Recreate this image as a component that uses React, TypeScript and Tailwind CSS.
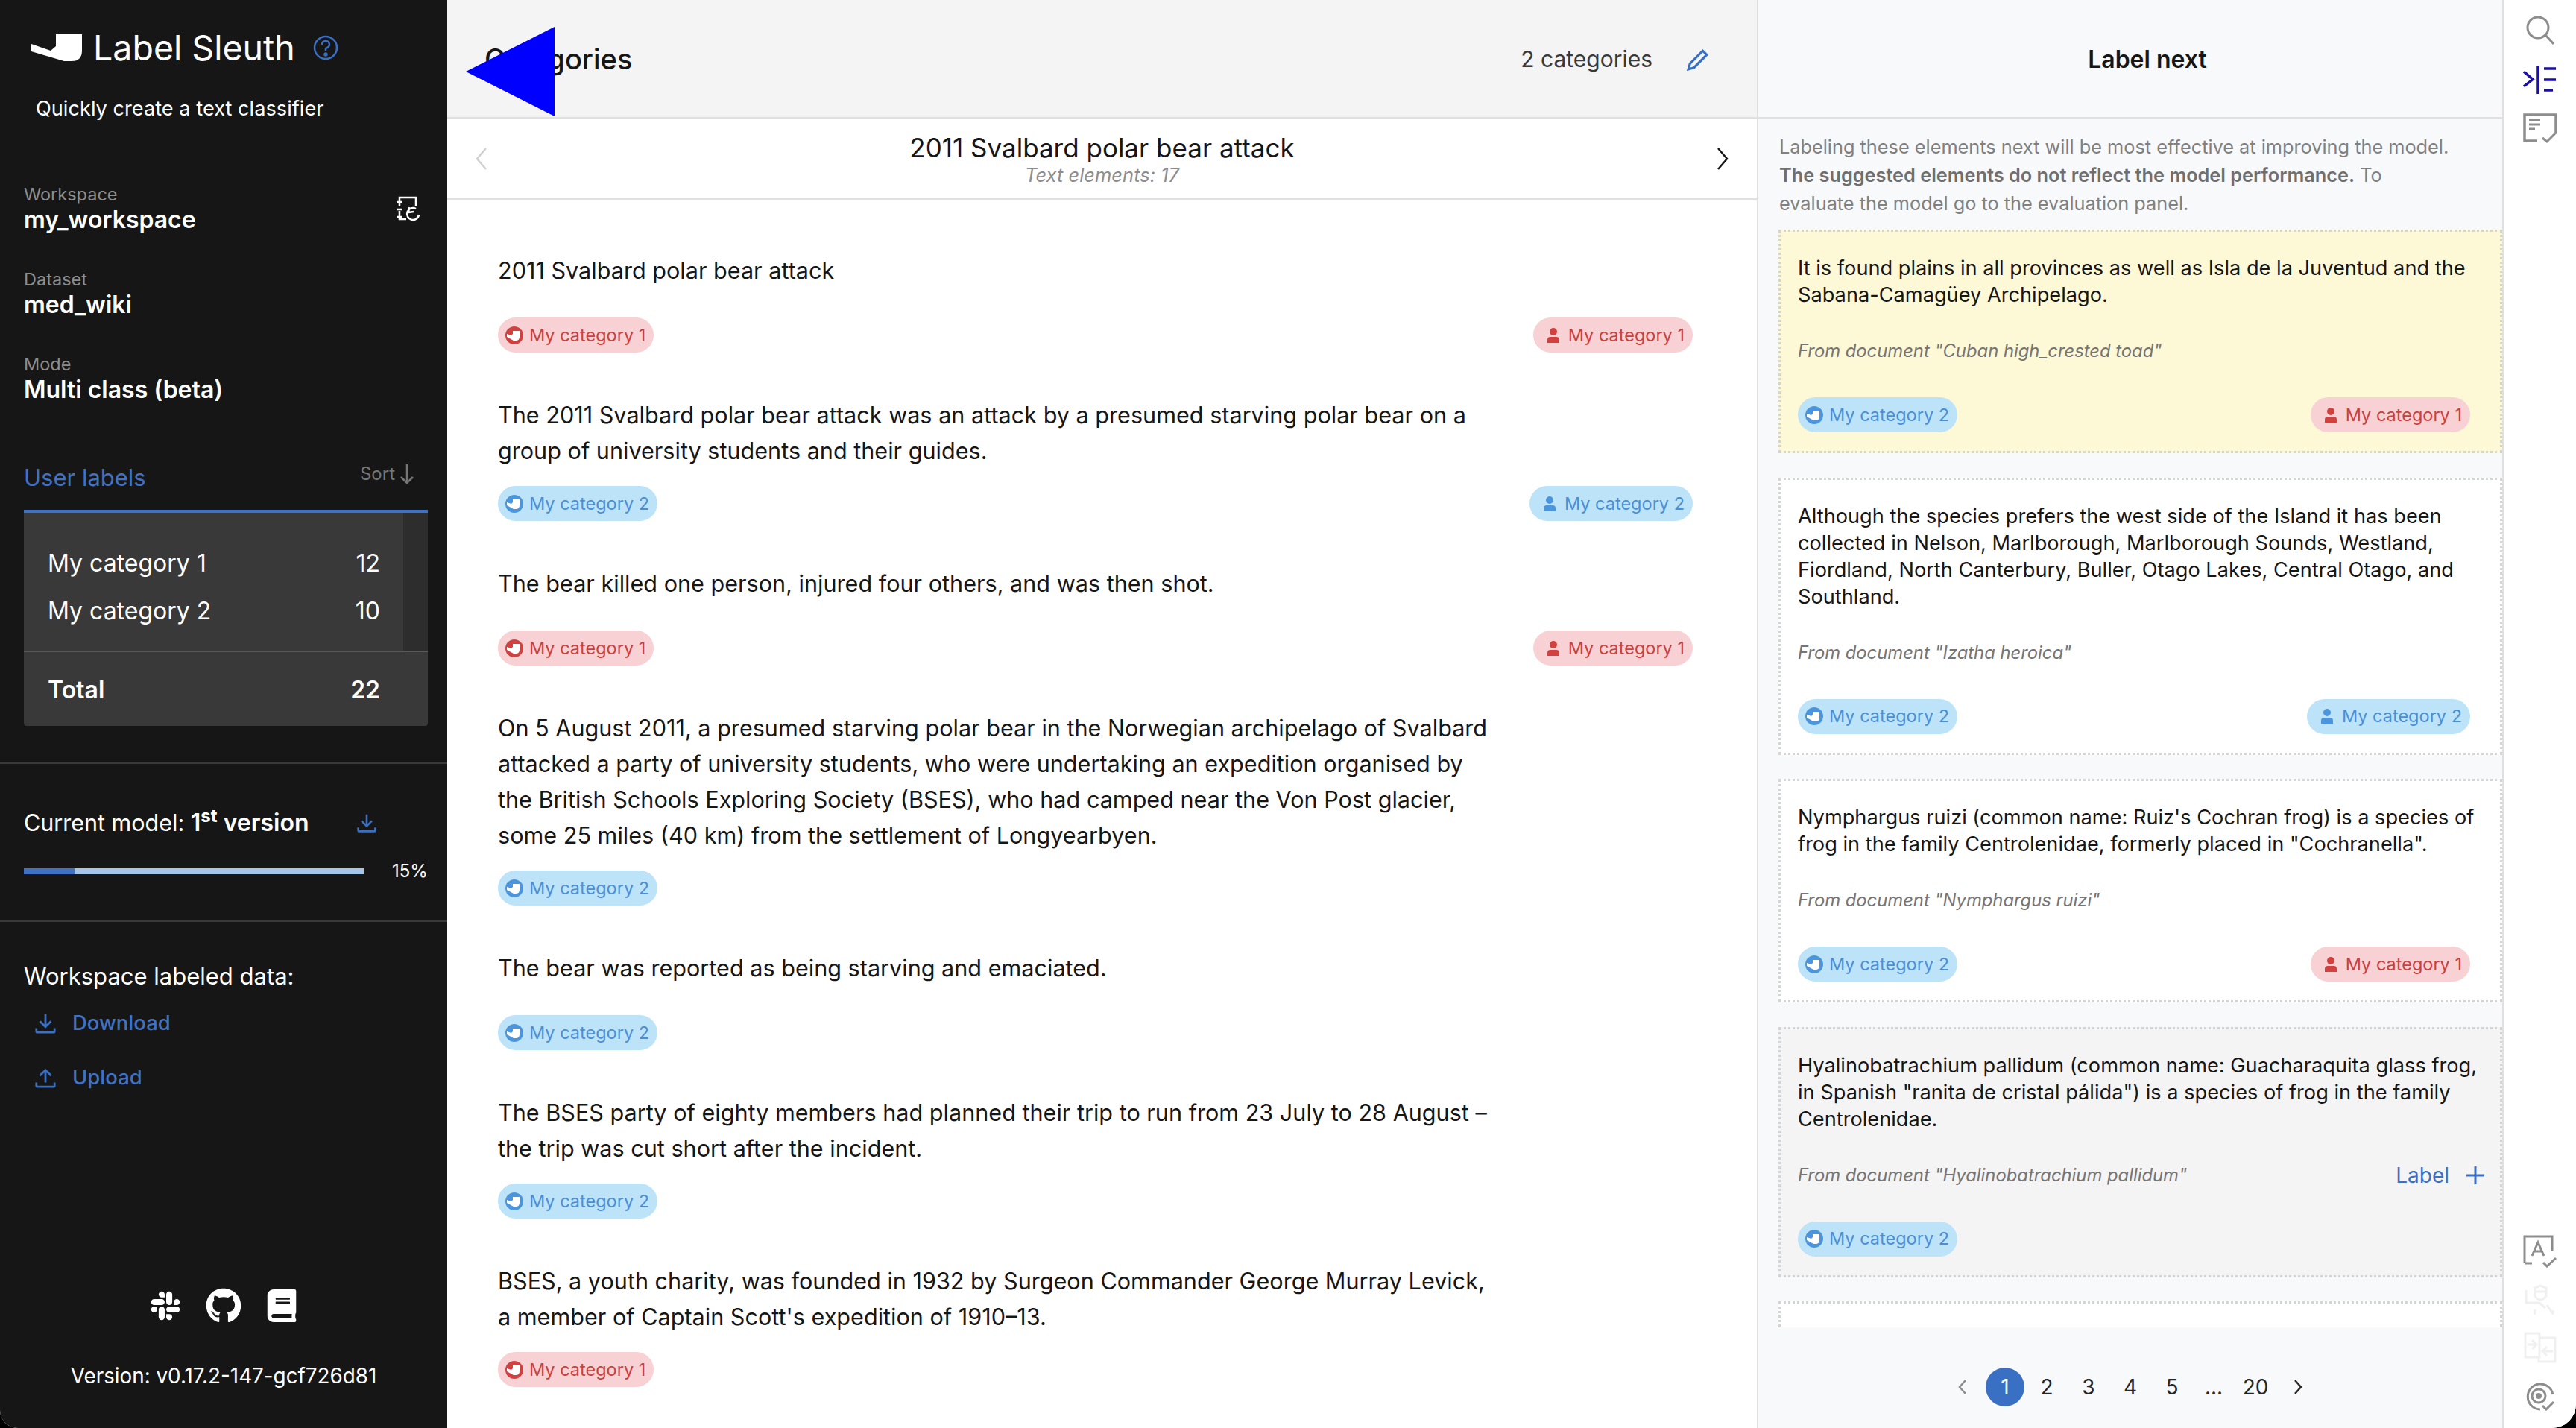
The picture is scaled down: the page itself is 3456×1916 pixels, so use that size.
import React from "react";
import { FaSlack, FaGithub, FaBook } from "react-icons/fa";

const logo = "M34 0H69V22Q69 36 55 36H45L1 23V13L27 22L34 16Z";

function Mini({ c }: { c: string }) {
  return (
    <svg width="26" height="26" viewBox="0 0 26 26" className="shrink-0">
      <circle cx="13" cy="13" r="12" fill={c} />
      <path d="M11 7H20V15Q20 20 15 20H12L3 15V11L9 13L11 11Z" fill="#fff" />
    </svg>
  );
}

function Person({ c }: { c: string }) {
  return (
    <svg width="26" height="26" viewBox="0 0 26 26" className="shrink-0">
      <circle cx="13" cy="8" r="5" fill={c} />
      <path d="M5 23V19Q5 15 9 15H17Q21 15 21 19V23Z" fill={c} />
    </svg>
  );
}

function Chip({ n, user = false }: { n: 1 | 2; user?: boolean }) {
  const red = n === 1;
  const c = red ? "#d0413f" : "#4a95dd";
  return (
    <span
      className={`inline-flex h-[47px] items-center gap-[7px] rounded-full pr-[11px] text-[23.5px] whitespace-nowrap ${
        user ? "pl-[14px]" : "pl-[9px]"
      } ${red ? "bg-[#f7d1d4] text-[#c9403f]" : "bg-[#bde3f9] text-[#4a8fd6]"}`}
    >
      {user ? <Person c={c} /> : <Mini c={c} />}
      My category {n}
    </span>
  );
}

function Para({ lines, left, right }: { lines: string[]; left?: 1 | 2; right?: 1 | 2 }) {
  return (
    <div className="mb-[60px]">
      <div className={`text-[30.6px] leading-[48px] text-[#161616] ${lines.length === 1 ? "mb-[39px]" : "mb-[23px]"}`}>
        {lines.map((l) => (
          <div key={l} className="whitespace-nowrap">{l}</div>
        ))}
      </div>
      <div className="flex h-[47px] items-center justify-between pr-[86px]">
        {left ? <Chip n={left} /> : <span />}
        {right ? <Chip n={right} user /> : <span />}
      </div>
    </div>
  );
}

function Card({
  lines, doc, left, right, bg = "bg-white", label = false,
}: { lines: string[]; doc: string; left: 1 | 2; right?: 1 | 2; bg?: string; label?: boolean }) {
  return (
    <div className={`mb-[32.5px] border-[3px] border-dotted border-[#d4d4d4] pl-[23px] pr-[40px] pb-[25px] pt-[31px] ${bg}`}>
      <div className="text-[27.2px] leading-[36px] text-[#161616]">
        {lines.map((l) => (
          <div key={l} className="whitespace-nowrap">{l}</div>
        ))}
      </div>
      <div className="mt-[40px] flex h-[34px] items-center justify-between">
        <span className="text-[23.8px] italic text-[#757575]">From document "{doc}"</span>
        {label && (
          <span className="mr-[-20px] flex items-center gap-[22px] text-[28px] text-[#3a70c4]">
            Label
            <svg width="26" height="26" viewBox="0 0 26 26"><path d="M13 1V25M1 13H25" stroke="#3a70c4" strokeWidth="3" fill="none" /></svg>
          </span>
        )}
      </div>
      <div className="mt-[45px] flex h-[47px] items-center justify-between">
        <Chip n={left} />
        {right ? <Chip n={right} user /> : <span />}
      </div>
    </div>
  );
}

function DownloadIcon({ s = 30 }: { s?: number }) {
  return (
    <svg width={s} height={s} viewBox="0 0 32 32" fill="none" stroke="#3a70c4" strokeWidth="3">
      <path d="M16 3V21M8 13L16 21L24 13" />
      <path d="M3 23V28Q3 29 4 29H28Q29 29 29 28V23" />
    </svg>
  );
}
function UploadIcon({ s = 30 }: { s?: number }) {
  return (
    <svg width={s} height={s} viewBox="0 0 32 32" fill="none" stroke="#3a70c4" strokeWidth="3">
      <path d="M16 23V5M8 13L16 5L24 13" />
      <path d="M3 23V28Q3 29 4 29H28Q29 29 29 28V23" />
    </svg>
  );
}

const g = "#8d8d8d";

function RailIcons() {
  return (
    <div className="flex h-full w-full flex-col justify-between pb-[23px] pt-[22px]">
      <div className="flex flex-col items-center">
        <svg width="40" height="38" viewBox="0 0 40 38" fill="none" stroke={g} strokeWidth="3">
          <circle cx="17" cy="15" r="14" />
          <path d="M27 25L38 37" />
        </svg>
        <svg className="mt-[28px]" width="46" height="38" viewBox="0 0 46 38" fill="none" stroke="#1a0ea8" strokeWidth="3">
          <path d="M1 8L13 18.500L1 28M20 0V38" strokeWidth="3.500" />
          <path d="M28 4H44M28 19H44M28 33H40" strokeWidth="3.500" />
        </svg>
        <svg className="mt-[26px]" width="46" height="40" viewBox="0 0 46 40" fill="none" stroke={g} strokeWidth="3">
          <path d="M44 26V2H2V37H19" strokeWidth="3.500" />
          <path d="M8 9H23M8 15H23M8 21H16" />
          <path d="M26 33L32 38L44 26" />
        </svg>
      </div>
      <div className="flex flex-col items-center">
        <svg width="46" height="44" viewBox="0 0 46 44" fill="none" stroke={g} strokeWidth="3">
          <path d="M2 38V2H39V22M2 38H12" strokeWidth="3" />
          <path d="M12 28L20 10L28 28M15 22H25" />
          <path d="M27 37L32 42L44 31" />
        </svg>
        <svg className="mt-[22px]" width="42" height="42" viewBox="0 0 42 42" fill="none" stroke="#f0f0f0" strokeWidth="3">
          <path d="M14 5L21 2L29 5V16Q21 26 14 16ZM14 10H29" />
          <path d="M2 8V25H20L28 32M38 40L30 28M14 34V41M38 35V41" />
        </svg>
        <svg className="mt-[22px]" width="44" height="42" viewBox="0 0 44 42" fill="none" stroke="#f0f0f0" strokeWidth="3">
          <path d="M2 2H21V34H2ZM20 8H42V40H20V34" />
          <path d="M5 17H16M11 11L17 17L11 23M39 26H26M31 20L25 26L31 32" />
        </svg>
        <svg className="mt-[26px]" width="40" height="38" viewBox="0 0 40 38" fill="none" stroke={g} strokeWidth="3">
          <path d="M20 36A17 17 0 1 1 37 16" />
          <circle cx="18" cy="18" r="9" />
          <circle cx="18" cy="18" r="4" fill={g} stroke="none" />
          <path d="M23 31L28 36L38 26" />
        </svg>
      </div>
    </div>
  );
}

export default function App() {
  return (
    <div className="h-[1916px] w-[3456px] bg-black [font-family:Inter,'Liberation_Sans',sans-serif]">
      <div className="relative flex h-full w-full overflow-hidden rounded-bl-[24px] rounded-br-[32px] bg-white">
        {/* Sidebar */}
        <aside className="flex h-full w-[600px] shrink-0 flex-col bg-[#161616] text-white">
          <div className="flex h-[174px] flex-col pl-[41px]">
            <div className="mt-[46px] flex h-[36px] items-center">
              <svg width="70" height="36" viewBox="0 0 70 36" fill="#fff"><path d={logo} /></svg>
              <span className="ml-[14px] text-[46.5px] leading-[36px] whitespace-nowrap">Label Sleuth</span>
              <svg className="ml-[24px]" width="34" height="34" viewBox="0 0 34 34" fill="none" stroke="#3a70c4" strokeWidth="2.500">
                <circle cx="17" cy="17" r="15" />
                <path d="M12 13Q12 8 17 8Q22 8 22 13Q22 16 17 18V21" />
                <circle cx="17" cy="26" r="1.500" fill="#3a70c4" />
              </svg>
            </div>
            <div className="ml-[7px] mt-[46px] text-[27.2px] leading-[36px] whitespace-nowrap">Quickly create a text classifier</div>
          </div>
          <div className="mt-[72px] flex h-[282px] flex-col pl-[32px] pr-[26px]">
            <div className="flex justify-between">
              <div>
                <div className="text-[23.5px] leading-[30px] text-[#8d8d8d]">Workspace</div>
                <div className="text-[32px] font-semibold leading-[38px]">my_workspace</div>
              </div>
              <svg className="mr-[9px] mt-[17px]" width="34" height="34" viewBox="0 0 34 34" fill="none" stroke="#fff" strokeWidth="2.500">
                <path d="M5 20V31H14M5 14V2H27V13M1 8H8M1 18H8M1 28H8" />
                <path d="M31 25A8 8 0 1 1 27 17M18 15L17 22L24 21" />
              </svg>
            </div>
            <div className="mt-[46px] text-[23.5px] leading-[30px] text-[#8d8d8d]">Dataset</div>
            <div className="text-[32px] font-semibold leading-[38px]">med_wiki</div>
            <div className="mt-[46px] text-[23.5px] leading-[30px] text-[#8d8d8d]">Mode</div>
            <div className="text-[32px] font-semibold leading-[38px]">Multi class (beta)</div>
          </div>
          <div className="pl-[32px] pr-[26px]">
            <div className="mt-[89px] flex h-[67px] items-start justify-between">
              <span className="mt-[4px] text-[31px] leading-[40px] text-[#3f72c4]">User labels</span>
              <span className="mr-[18px] mt-[1px] flex items-center gap-[6px] text-[24px] leading-[36px] text-[#767676]">
                Sort
                <svg width="20" height="28" viewBox="0 0 20 28" fill="none" stroke="#767676" strokeWidth="2.500"><path d="M10 1V26M2 18L10 26L18 18" /></svg>
              </span>
            </div>
            <div className="border-t-[4px] border-[#3f72c4]">
              <div className="overflow-hidden rounded-b-[4px] bg-[#393939]">
                <div className="flex h-[185px]">
                  <div className="flex flex-1 flex-col pl-[32px] pr-[31px] pt-[36px] text-[32px] leading-[64px]">
                    <div className="flex justify-between"><span>My category 1</span><span>12</span></div>
                    <div className="flex justify-between"><span>My category 2</span><span>10</span></div>
                  </div>
                  <div className="w-[33px] bg-[#2d2d2d]" />
                </div>
                <div className="h-[2px] bg-[#5a5a5a]" />
                <div className="flex h-[99px] items-center justify-between pl-[32px] pr-[64px] pt-[2px] text-[32px] font-semibold">
                  <span>Total</span><span>22</span>
                </div>
              </div>
            </div>
          </div>
          <div className="mt-[49px] h-[2px] bg-[#393939]" />
          <div className="pl-[32px] pr-[26px]">
            <div className="mt-[54px] flex h-[50px] items-center justify-between pr-[68px] text-[30.5px] leading-[50px]">
              <span>Current model: <b className="text-[32px] font-semibold">1<sup className="text-[24px] font-bold">st</sup> version</b></span>
              <DownloadIcon s={28} />
            </div>
            <div className="mt-[22px] flex items-center">
              <div className="h-[8px] w-[456px] bg-[#a6c5ea]">
                <div className="h-full w-[15%] bg-[#3f72c4]" />
              </div>
              <span className="ml-[38px] text-[24px]">15%</span>
            </div>
          </div>
          <div className="mt-[48px] h-[2px] bg-[#393939]" />
          <div className="pl-[32px]">
            <div className="mt-[54px] text-[31px] leading-[38px]">Workspace labeled data:</div>
            <div className="ml-[14px] mt-[24px] flex h-[40px] items-center gap-[21px] text-[27.5px] font-medium text-[#3f72c4]">
              <DownloadIcon s={30} /> Download
            </div>
            <div className="ml-[14px] mt-[33px] flex h-[40px] items-center gap-[21px] text-[27.5px] font-medium text-[#3f72c4]">
              <UploadIcon s={30} /> Upload
            </div>
          </div>
          <div className="mt-auto flex flex-col items-center pb-[52px]">
            <div className="flex items-center gap-[32px] text-[48px] text-white">
              <FaSlack size={44} />
              <FaGithub size={48} />
              <FaBook size={44} />
            </div>
            <div className="mt-[52px] text-[27.8px] leading-[36px]">Version: v0.17.2-147-gcf726d81</div>
          </div>
        </aside>

        {/* Main */}
        <main className="flex h-full w-[1757px] shrink-0 flex-col">
          <header className="flex h-[160px] shrink-0 items-center justify-between border-b-[3px] border-[#e0e0e0] bg-[#f4f4f4] pl-[50px] pr-[64px] pt-[2px]">
            <span className="text-[38px] font-medium text-[#161616]">Categories</span>
            <div className="flex items-center gap-[46px]">
              <span className="text-[30px] text-[#393939]">2 categories</span>
              <svg width="30" height="30" viewBox="0 0 28 28" fill="none" stroke="#3a70c4" strokeWidth="3"><path d="M2 26L4 19L20 3L25 8L9 24Z" /></svg>
            </div>
          </header>
          <div className="relative flex h-[109px] shrink-0 items-center justify-between border-b-[3px] border-[#e0e0e0] px-[38px]">
            <svg width="16" height="30" viewBox="0 0 16 30" fill="none" stroke="#d0d0d0" strokeWidth="2.500"><path d="M14 1L2 15L14 29" /></svg>
            <div className="text-center">
              <div className="text-[35px] leading-[44px] text-[#161616]">2011 Svalbard polar bear attack</div>
              <div className="text-[25.5px] italic leading-[30px] text-[#8d8d8d]">Text elements: 17</div>
            </div>
            <svg width="16" height="30" viewBox="0 0 16 30" fill="none" stroke="#161616" strokeWidth="2.500"><path d="M2 1L14 15L2 29" /></svg>
          </div>
          <div className="flex-1 overflow-hidden pl-[68px] pt-[70px]">
            <Para lines={["2011 Svalbard polar bear attack"]} left={1} right={1} />
            <Para lines={["The 2011 Svalbard polar bear attack was an attack by a presumed starving polar bear on a", "group of university students and their guides."]} left={2} right={2} />
            <Para lines={["The bear killed one person, injured four others, and was then shot."]} left={1} right={1} />
            <Para lines={["On 5 August 2011, a presumed starving polar bear in the Norwegian archipelago of Svalbard", "attacked a party of university students, who were undertaking an expedition organised by", "the British Schools Exploring Society (BSES), who had camped near the Von Post glacier,", "some 25 miles (40 km) from the settlement of Longyearbyen."]} left={2} />
            <Para lines={["The bear was reported as being starving and emaciated."]} left={2} />
            <Para lines={["The BSES party of eighty members had planned their trip to run from 23 July to 28 August –", "the trip was cut short after the incident."]} left={2} />
            <Para lines={["BSES, a youth charity, was founded in 1932 by Surgeon Commander George Murray Levick,", "a member of Captain Scott's expedition of 1910–13."]} left={1} />
          </div>
        </main>

        {/* Label next */}
        <section className="flex h-full w-[1002px] shrink-0 flex-col border-x-[2px] border-[#e0e0e0] bg-[#f7f9fb]">
          <header className="flex h-[160px] shrink-0 items-center justify-center border-b-[3px] border-[#e0e0e0] pl-[46px] pt-[2px] text-[32px] font-semibold text-[#161616]">
            Label next
          </header>
          <div className="h-[148px] shrink-0 pl-[28px] pt-[18px] text-[25.3px] leading-[38px] text-[#808080]">
            <div className="whitespace-nowrap">Labeling these elements next will be most effective at improving the model.</div>
            <div className="whitespace-nowrap"><b className="font-semibold text-[#6f6f6f]">The suggested elements do not reflect the model performance.</b> To</div>
            <div className="whitespace-nowrap">evaluate the model go to the evaluation panel.</div>
          </div>
          <div className="h-[1473px] shrink-0 overflow-hidden pl-[27px]">
            <Card bg="bg-[#fdf8d6]" lines={["It is found plains in all provinces as well as Isla de la Juventud and the", "Sabana-Camagüey Archipelago."]} doc="Cuban high_crested toad" left={2} right={1} />
            <Card lines={["Although the species prefers the west side of the Island it has been", "collected in Nelson, Marlborough, Marlborough Sounds, Westland,", "Fiordland, North Canterbury, Buller, Otago Lakes, Central Otago, and", "Southland."]} doc="Izatha heroica" left={2} right={2} />
            <Card lines={["Nymphargus ruizi (common name: Ruiz's Cochran frog) is a species of", "frog in the family Centrolenidae, formerly placed in \"Cochranella\"."]} doc="Nymphargus ruizi" left={2} right={1} />
            <Card bg="bg-[#f4f4f4]" label lines={["Hyalinobatrachium pallidum (common name: Guacharaquita glass frog,", "in Spanish \"ranita de cristal pálida\") is a species of frog in the family", "Centrolenidae."]} doc="Hyalinobatrachium pallidum" left={2} />
            <div className="h-[60px] border-[3px] border-dotted border-[#d4d4d4] bg-white" />
          </div>
          <div className="flex flex-1 items-center justify-center pt-[24px] text-[28px] text-[#262626]">
            <svg className="mr-[24px]" width="14" height="22" viewBox="0 0 14 22" fill="none" stroke="#8d8d8d" strokeWidth="2.500"><path d="M11 2L3 11L11 20" /></svg>
            <span className="flex h-[52px] w-[52px] items-center justify-center rounded-full bg-[#3a70c4] text-white">1</span>
            {["2", "3", "4", "5", "...", "20"].map((p) => (
              <span key={p} className="ml-[4px] flex h-[52px] w-[52px] items-center justify-center">{p}</span>
            ))}
            <svg className="ml-[24px]" width="14" height="22" viewBox="0 0 14 22" fill="none" stroke="#262626" strokeWidth="2.500"><path d="M3 2L11 11L3 20" /></svg>
          </div>
        </section>

        {/* Rail */}
        <nav className="h-full flex-1 bg-white">
          <RailIcons />
        </nav>

        {/* Marker overlaid on the header */}
        <svg className="absolute left-[625px] top-[36px]" width="119" height="120" viewBox="0 0 119 120">
          <path d="M119 0V120L0 60Z" fill="#0000ff" />
        </svg>
      </div>
    </div>
  );
}
